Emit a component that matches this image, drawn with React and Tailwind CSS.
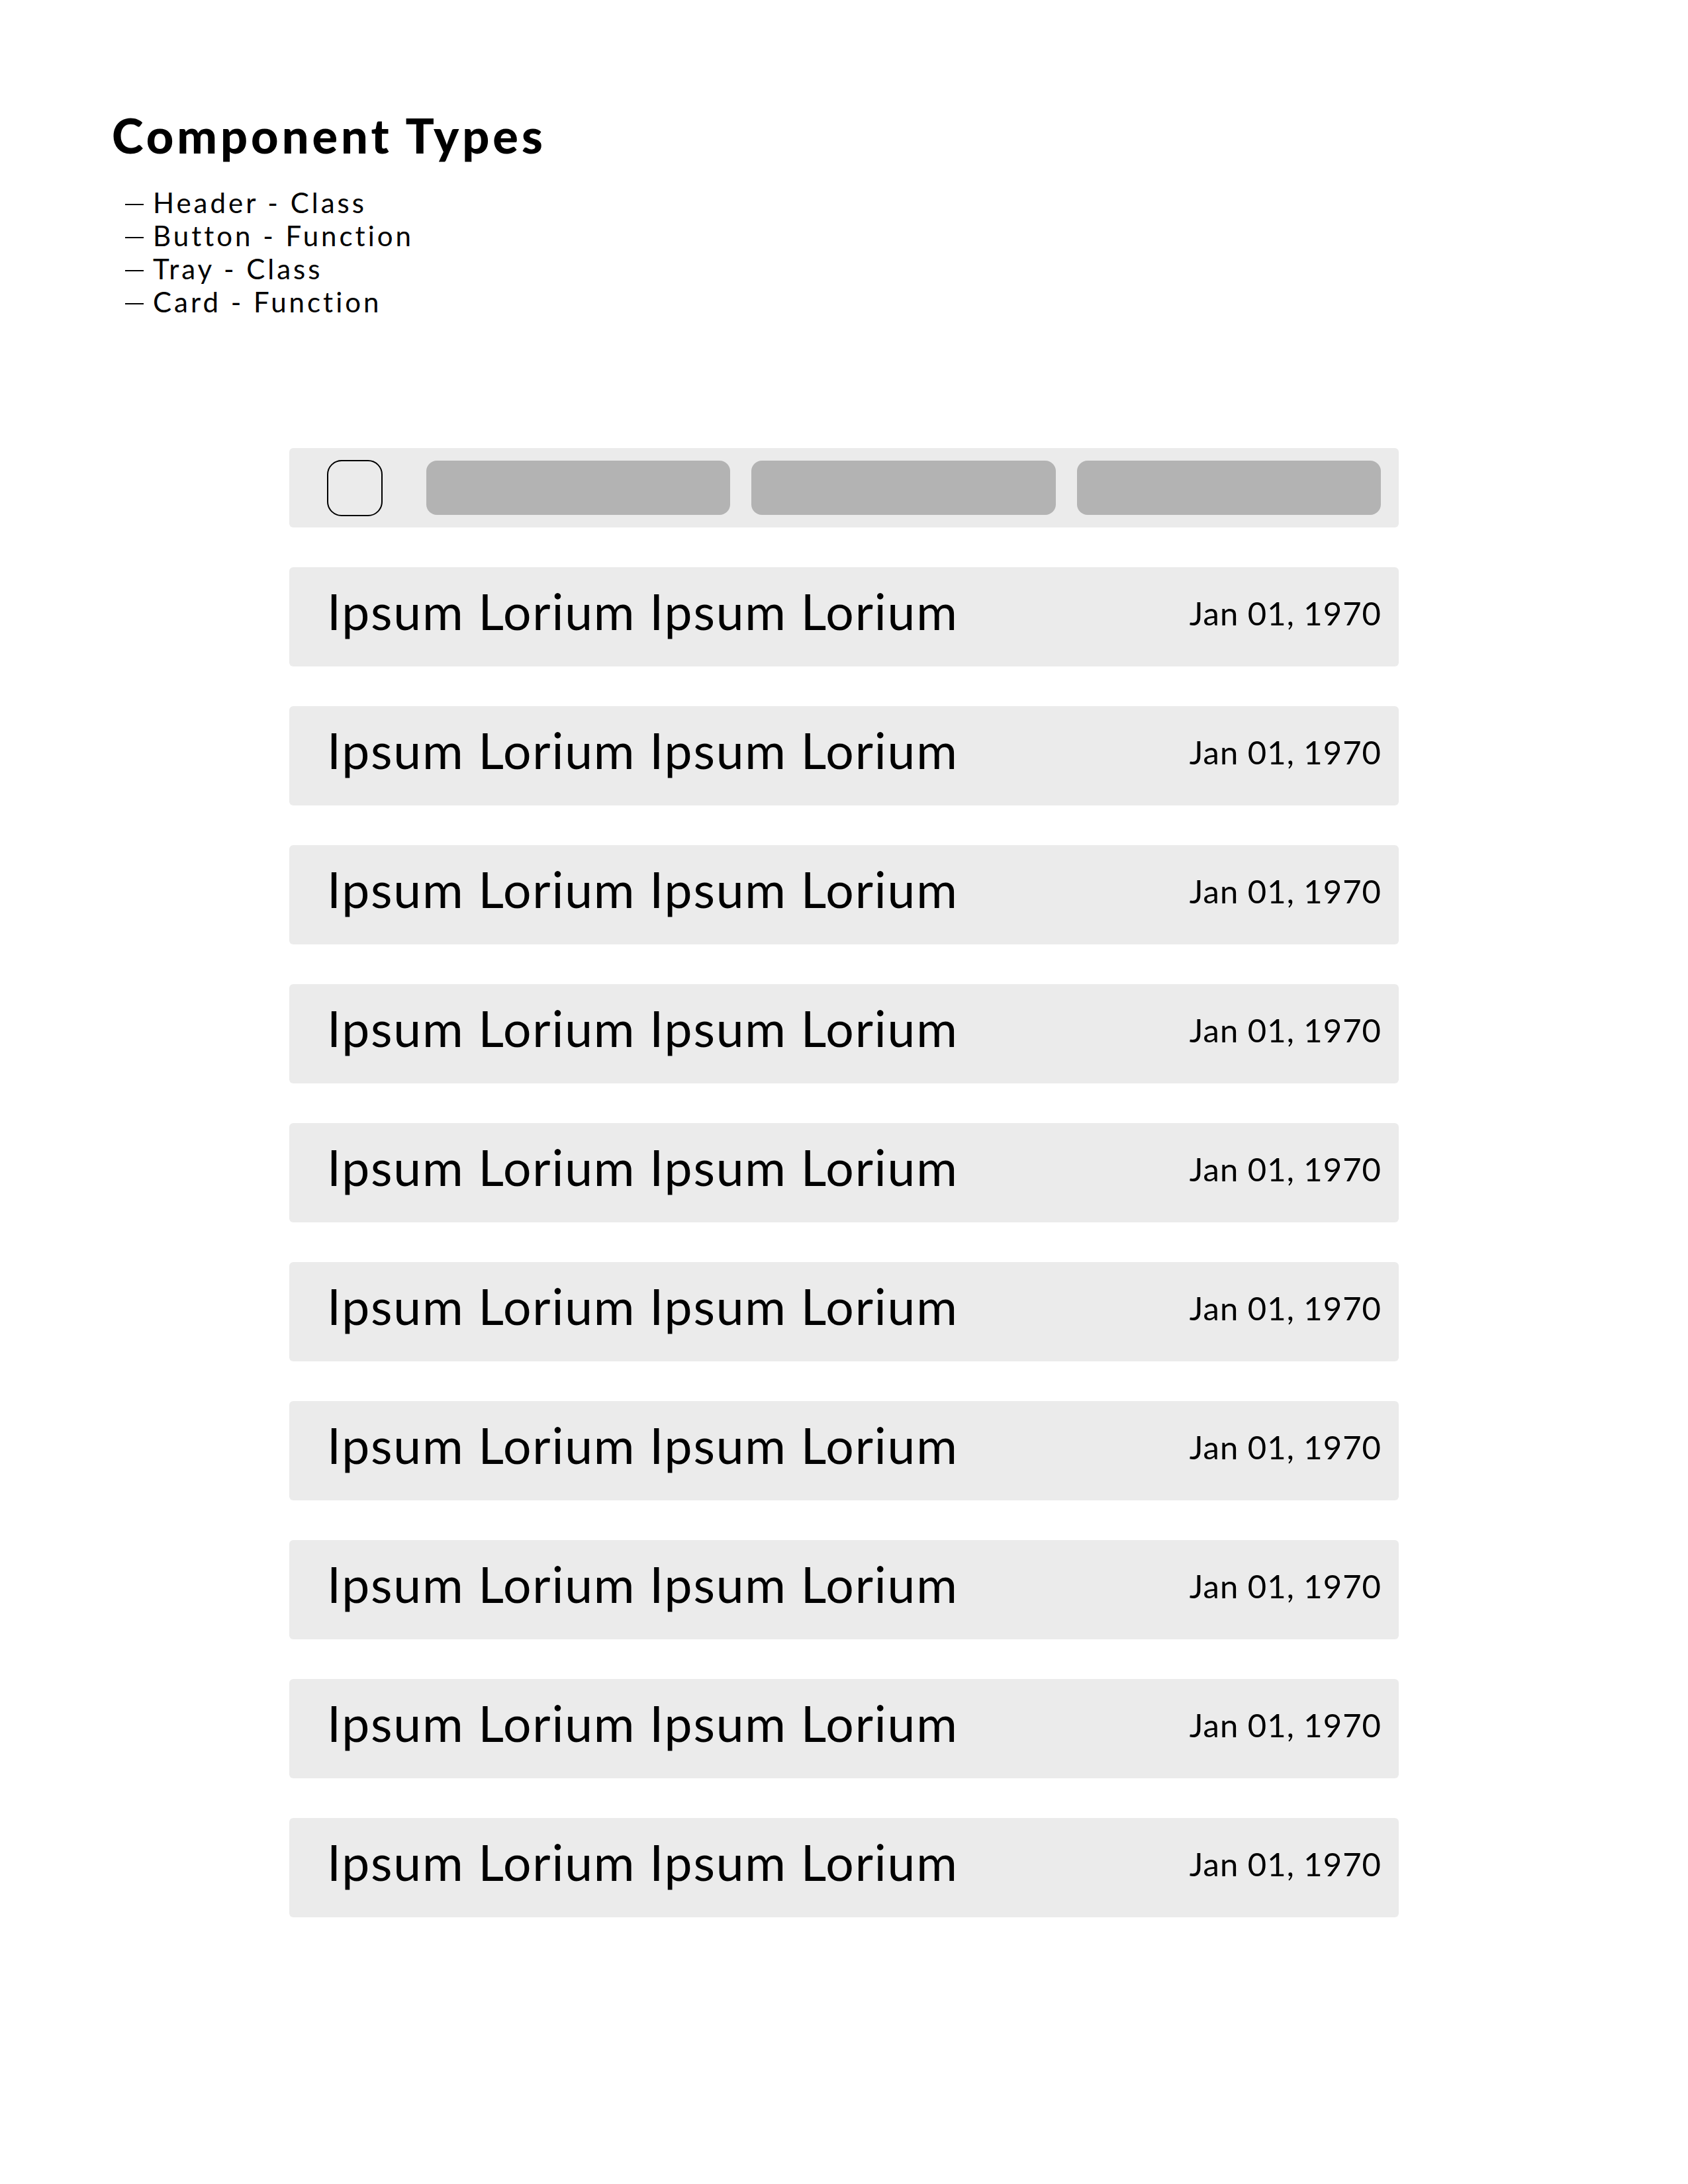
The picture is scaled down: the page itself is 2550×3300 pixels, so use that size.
const types = [
  "Header - Class",
  "Button - Function",
  "Tray - Class",
  "Card - Function",
];

const rows = Array.from({ length: 10 }, (_, i) => ({
  id: i,
  title: "Ipsum Lorium Ipsum Lorium",
  date: "Jan 01, 1970",
}));

function Header() {
  return (
    <div className="flex items-center h-[120px] bg-[#ebebeb] rounded-md pl-[57px] pr-[27px]">
      <div className="w-[84px] h-[85px] border-2 border-black rounded-[22px] shrink-0" />
      <div className="flex flex-1 gap-[32px] ml-[66px]">
        <div className="flex-1 h-[82px] bg-[#b3b3b3] rounded-[16px]" />
        <div className="flex-1 h-[82px] bg-[#b3b3b3] rounded-[16px]" />
        <div className="flex-1 h-[82px] bg-[#b3b3b3] rounded-[16px]" />
      </div>
    </div>
  );
}

function Card({ title, date }) {
  return (
    <div className="flex items-center justify-between h-[150px] bg-[#ebebeb] rounded-md pl-[57px] pr-[26px]">
      <span className="text-[75px] leading-none tracking-[1.8px] mb-[18px] text-black">{title}</span>
      <span className="text-[49px] leading-none tracking-[1px] mb-[12px] text-black">{date}</span>
    </div>
  );
}

export default function App() {
  return (
    <div className="min-h-[3300px] bg-white text-black font-['Lato','Noto_Sans',sans-serif] pt-[168px]">
      <div className="pl-[169px]">
        <h1 className="text-[72px] leading-none font-black tracking-[5px]">Component Types</h1>
        <ul className="mt-[41px] ml-[20px] text-[42px] leading-[50px] tracking-[4px]">
          {types.map((t) => (
            <li key={t} className="flex items-center">
              <span className="inline-block w-[28px] h-[2px] bg-black mt-[6px] mr-[14px]" />
              <span>{t}</span>
            </li>
          ))}
        </ul>
      </div>

      <div className="w-[1676px] mx-auto mt-[196px] flex flex-col gap-[60px]">
        <Header />
        {rows.map((r) => (
          <Card key={r.id} title={r.title} date={r.date} />
        ))}
      </div>
    </div>
  );
}
